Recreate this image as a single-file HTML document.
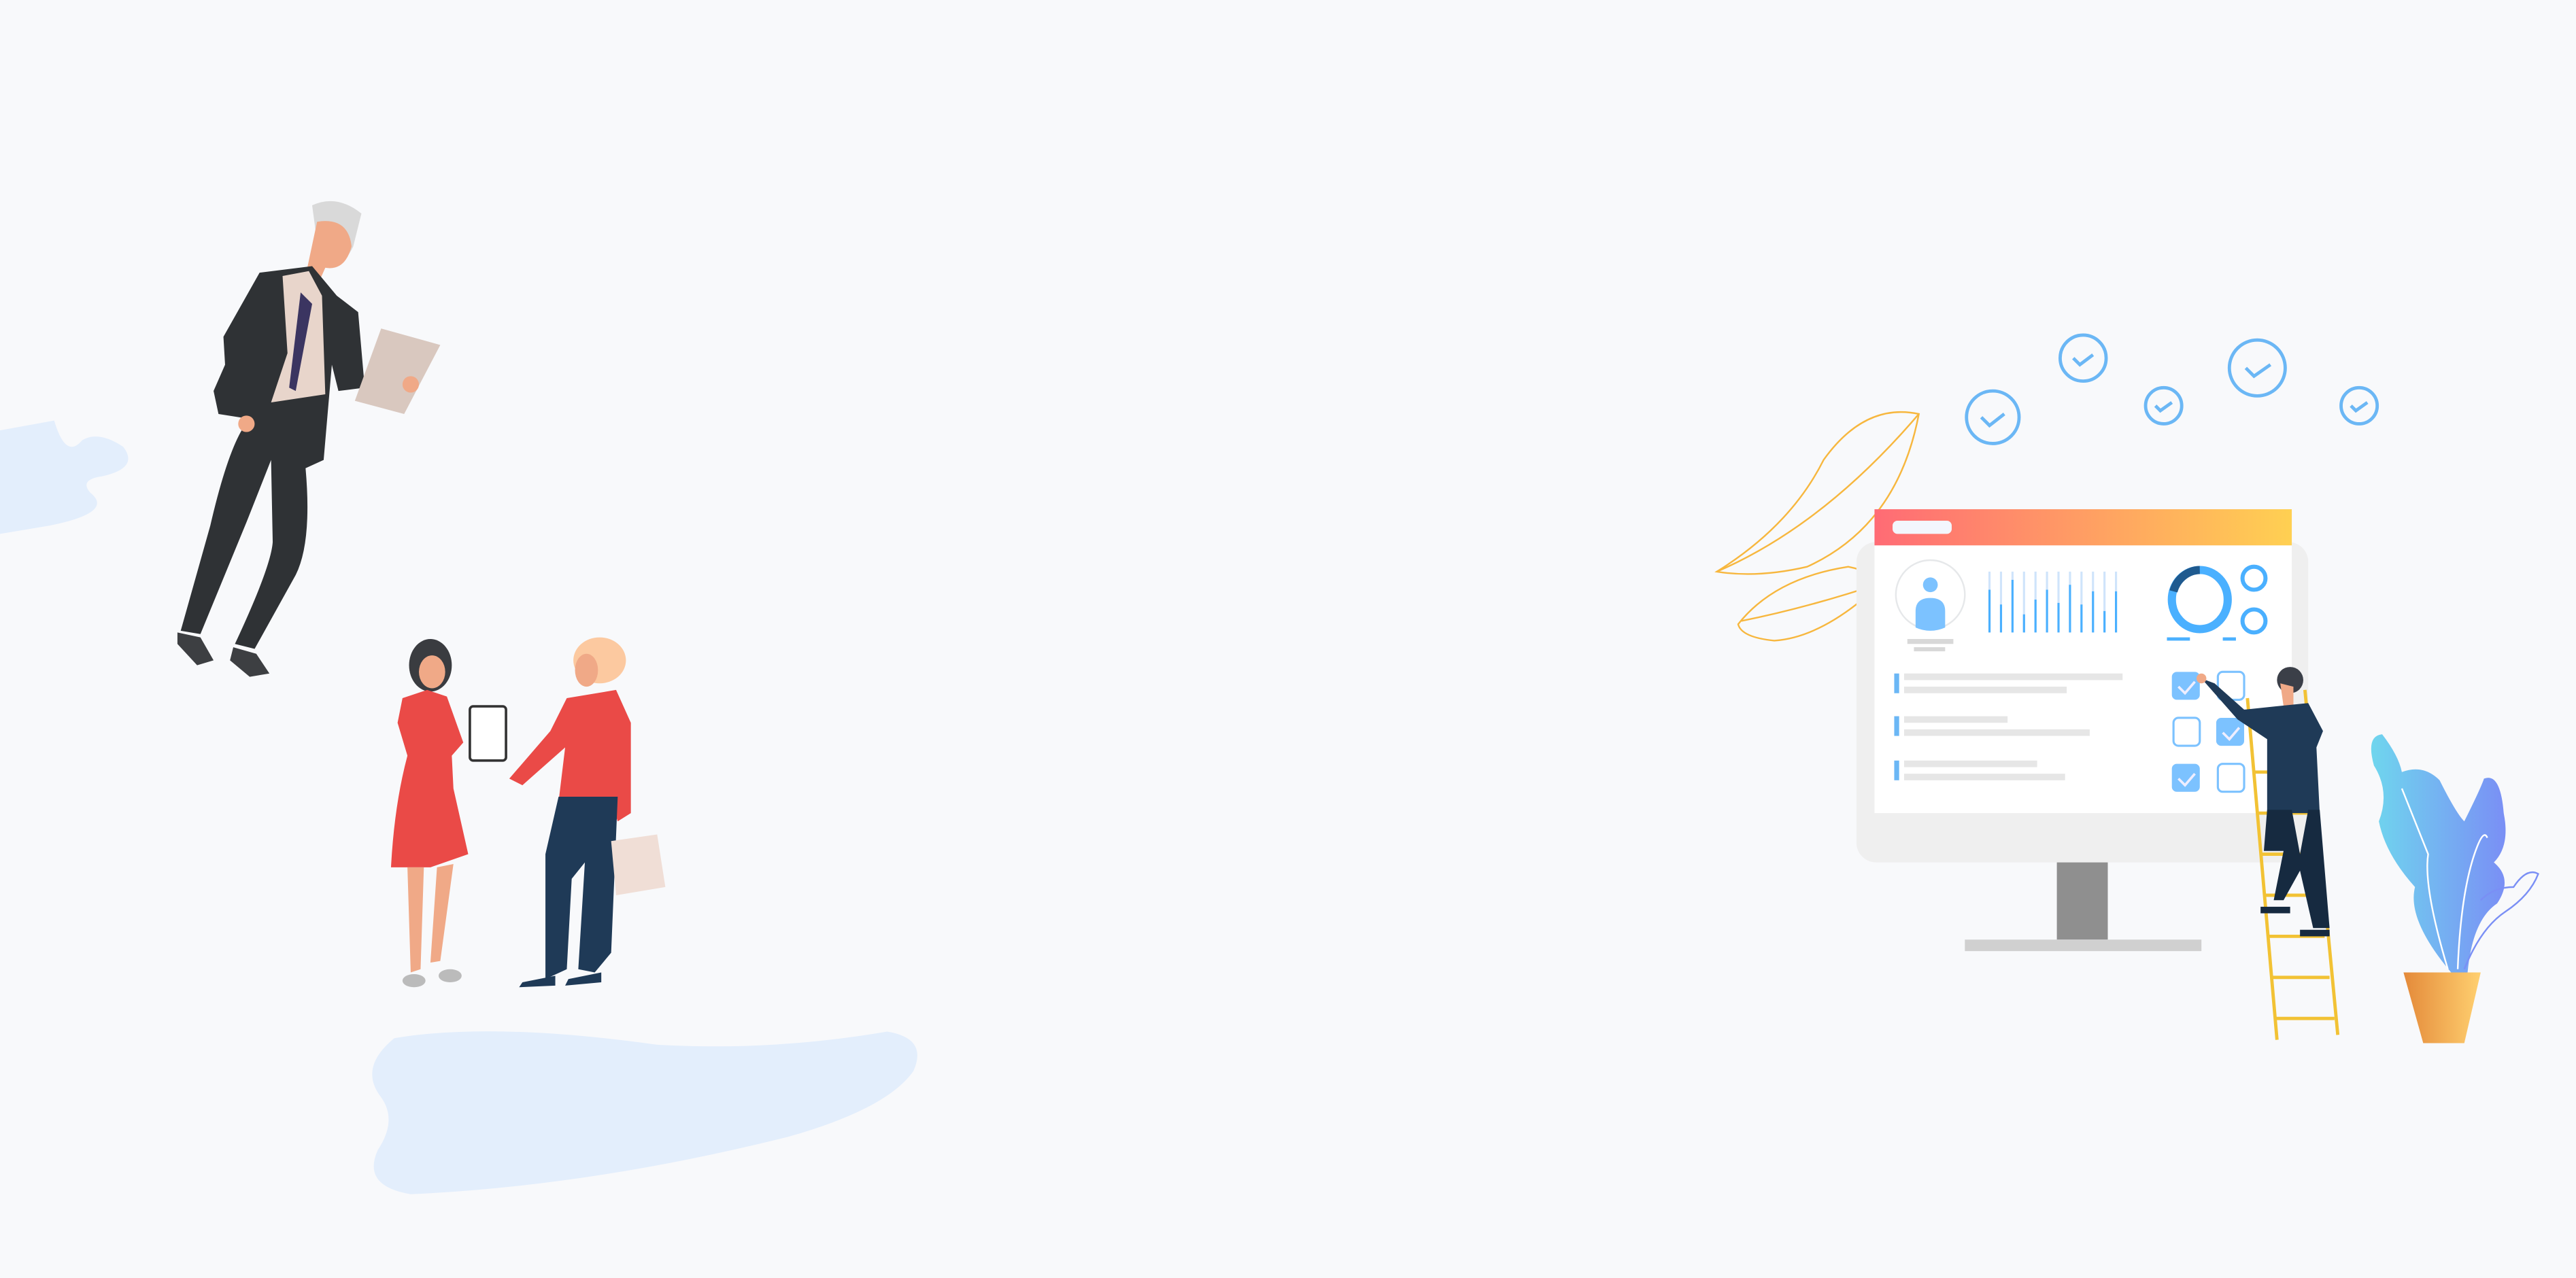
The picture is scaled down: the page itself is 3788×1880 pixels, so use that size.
<!DOCTYPE html>
<html><head><meta charset="utf-8"><style>
html,body{margin:0;padding:0;background:#f8f9fb;}
svg{display:block;width:3788px;height:1880px;}
</style></head><body>
<svg viewBox="0 0 1568 778" width="3788" height="1880" preserveAspectRatio="none" xmlns="http://www.w3.org/2000/svg">
<defs>
<linearGradient id="hd" x1="0" x2="1"><stop offset="0" stop-color="#ff6b75"/><stop offset="1" stop-color="#ffd052"/></linearGradient>
<linearGradient id="pl" x1="0" x2="1"><stop offset="0" stop-color="#6fd6ee"/><stop offset="1" stop-color="#7a8ff5"/></linearGradient>
<linearGradient id="pot" x1="0" x2="1"><stop offset="0" stop-color="#e48a3a"/><stop offset="1" stop-color="#ffd070"/></linearGradient>
</defs>
<rect width="1568" height="778" fill="#f8f9fb"/>
<!-- blobs -->
<path d="M0 262 L33 256 Q40 280 50 268 Q60 262 75 272 Q85 285 62 290 Q48 292 55 300 Q70 312 30 320 L0 325 Z" fill="#e3eefc"/>
<path d="M240 632 Q300 622 400 636 Q470 640 540 628 Q565 632 556 652 Q540 675 480 692 Q360 722 250 727 Q220 722 230 700 Q242 682 232 668 Q218 650 240 632Z" fill="#e3eefc"/>
<!-- businessman -->
<path d="M190 125 Q205 118 220 130 L215 150 Q208 165 195 162 Z" fill="#d9d9d9"/>
<path d="M193 135 Q212 132 214 150 Q210 165 198 163 L194 172 L186 168 Z" fill="#f0a987"/>
<path d="M158 166 L190 162 L205 180 L218 190 L222 236 L206 238 L202 222 L197 280 L186 285 Q190 330 180 350 L155 395 L143 392 Q165 345 166 330 L165 280 L150 318 L122 386 L110 384 L128 320 Q140 268 152 255 L133 252 L130 238 L137 222 L136 205 Z" fill="#2f3235"/>
<path d="M172 168 L188 165 L196 180 L198 240 L165 245 L175 215 Z" fill="#e8d5cb"/>
<path d="M183 178 L190 185 L180 238 L176 236 Z" fill="#3b3561"/>
<path d="M108 385 L122 388 L130 402 L120 405 L108 392Z M142 394 L156 398 L164 410 L152 412 L140 402Z" fill="#3d3f42"/>
<path d="M232 200 L268 210 L246 252 L216 244 Z" fill="#d9c8bf"/>
<circle cx="250" cy="234" r="5" fill="#f0a987"/>
<circle cx="150" cy="258" r="5" fill="#f0a987"/>
<!-- woman 1 -->
<ellipse cx="262" cy="405" rx="13" ry="16" fill="#3a3c40"/>
<ellipse cx="263" cy="409" rx="8" ry="10" fill="#f0a987"/>
<path d="M245 425 L260 420 L272 424 L282 452 L275 460 L276 480 L285 520 L262 528 L238 528 Q240 490 248 460 L242 440 Z" fill="#ea4a47"/>
<path d="M248 528 L258 528 L256 590 L250 592 Z M266 528 L276 526 L268 585 L262 586 Z" fill="#f0a987"/>
<rect x="286" y="430" width="22" height="33" rx="2" fill="#fff" stroke="#333" stroke-width="1.5"/>
<ellipse cx="252" cy="597" rx="7" ry="4" fill="#bbb"/><ellipse cx="274" cy="594" rx="7" ry="4" fill="#bbb"/>
<!-- woman 2 -->
<ellipse cx="365" cy="402" rx="16" ry="14" fill="#fcc9a0"/>
<ellipse cx="357" cy="408" rx="7" ry="10" fill="#f0a987"/>
<path d="M345 425 L375 420 L384 440 L384 495 L376 500 L372 488 L340 488 L344 455 L318 478 L310 474 L335 445 Z" fill="#ea4a47"/>
<path d="M340 485 L376 485 L372 580 L362 592 L352 590 L356 525 L348 535 L345 590 L332 596 L332 520 Z" fill="#1f3a57"/>
<path d="M372 512 L400 508 L405 540 L375 545 Z" fill="#f0ded6"/>
<path d="M318 598 L338 594 L338 600 L316 601Z M346 596 L366 592 L366 598 L344 600Z" fill="#1f3a57"/>
<!-- leaves -->
<g fill="none" stroke="#f7b73e" stroke-width="1">
<path d="M1045 348 Q1090 320 1110 280 Q1135 245 1168 252 Q1155 320 1100 345 Q1070 352 1045 348Z"/>
<path d="M1045 348 Q1110 320 1168 252"/>
<path d="M1058 380 Q1080 352 1125 345 Q1140 348 1145 355 Q1110 388 1080 390 Q1060 388 1058 380Z"/>
<path d="M1060 378 Q1100 370 1145 355"/>
</g>
<!-- check circles -->
<g fill="none" stroke="#6bb7f5" stroke-width="2">
<circle cx="1213" cy="254" r="16"/><circle cx="1268" cy="218" r="14"/><circle cx="1317" cy="247" r="11"/><circle cx="1374" cy="224" r="17"/><circle cx="1436" cy="247" r="11"/>
<path d="M1206 254 l5 5 l9 -7 M1262 218 l4 4 l8 -6 M1312 247 l3 3 l7 -5 M1367 224 l5 5 l10 -7 M1431 247 l3 3 l7 -5"/>
</g>
<!-- monitor -->
<rect x="1130" y="330" width="275" height="195" rx="12" fill="#efefef"/>
<rect x="1252" y="525" width="31" height="47" fill="#8f8f8f"/>
<rect x="1196" y="572" width="144" height="7" fill="#d0d0d0"/>
<rect x="1141" y="332" width="254" height="163" fill="#fff"/>
<rect x="1141" y="310" width="254" height="22" fill="url(#hd)"/>
<rect x="1152" y="317" width="36" height="8" rx="3" fill="#f3f6fd"/>
<circle cx="1175" cy="362" r="21" fill="#fff" stroke="#e6e8ea" stroke-width="1"/>
<circle cx="1175" cy="356" r="4.5" fill="#7cc2ff"/>
<path d="M1166 382 L1166 372 Q1166 364 1175 364 Q1184 364 1184 372 L1184 382 Q1175 386 1166 382Z" fill="#7cc2ff"/>
<rect x="1161" y="389" width="28" height="3" fill="#d8d8d8"/><rect x="1165" y="394" width="19" height="2.5" fill="#d8d8d8"/>
<g stroke-width="1.3">
<g stroke="#cfe4fb"><path d="M1211 348V385M1218 348V385M1225 348V385M1232 348V385M1239 348V385M1246 348V385M1253 348V385M1260 348V385M1267 348V385M1274 348V385M1281 348V385M1288 348V385"/></g>
<g stroke="#4ab0ff"><path d="M1211 359V385M1218 368V385M1225 353V385M1232 374V385M1239 365V385M1246 359V385M1253 367V385M1260 356V385M1267 368V385M1274 360V385M1281 372V385M1288 360V385"/></g>
</g>
<ellipse cx="1339" cy="365" rx="17" ry="18" fill="none" stroke="#4ab0ff" stroke-width="5"/>
<path d="M1339 347 A17 18 0 0 0 1323 360" fill="none" stroke="#1f5a8f" stroke-width="5"/>
<circle cx="1372" cy="352" r="7" fill="none" stroke="#4ab0ff" stroke-width="2.5"/>
<circle cx="1372" cy="378" r="7" fill="none" stroke="#4ab0ff" stroke-width="2.5"/>
<rect x="1319" y="388" width="14" height="2" fill="#4ab0ff"/><rect x="1353" y="388" width="8" height="2" fill="#4ab0ff"/>
<g fill="#e6e6e6">
<rect x="1159" y="410" width="133" height="4"/><rect x="1159" y="418" width="99" height="4"/>
<rect x="1159" y="436" width="63" height="4"/><rect x="1159" y="444" width="113" height="4"/>
<rect x="1159" y="463" width="81" height="4"/><rect x="1159" y="471" width="98" height="4"/>
</g>
<g fill="#6bb7f5"><rect x="1153" y="410" width="3" height="12"/><rect x="1153" y="436" width="3" height="12"/><rect x="1153" y="463" width="3" height="12"/></g>
<g fill="#7cc2ff"><rect x="1322" y="409" width="17" height="17" rx="3"/><rect x="1349" y="437" width="17" height="17" rx="3"/><rect x="1322" y="465" width="17" height="17" rx="3"/></g>
<g fill="none" stroke="#7cc2ff" stroke-width="1.3"><rect x="1350" y="409" width="16" height="17" rx="3"/><rect x="1323" y="437" width="16" height="17" rx="3"/><rect x="1350" y="465" width="16" height="17" rx="3"/></g>
<g fill="none" stroke="#eef" stroke-width="1.5"><path d="M1326 418l4 4 6-7M1353 446l4 4 6-7M1326 474l4 4 6-7"/></g>
<!-- ladder -->
<g stroke="#f2c234" stroke-width="2" fill="none">
<path d="M1368 425 L1386 633 M1403 420 L1423 630"/>
<path d="M1372 470h33M1374 495h33M1376 520h34M1378 545h34M1380 570h35M1382 595h36M1384 620h37"/>
</g>
<!-- man on ladder -->
<ellipse cx="1394" cy="414" rx="8" ry="8" fill="#3b3f48"/>
<path d="M1388 416 L1396 418 L1396 430 L1390 430Z" fill="#f0a987"/>
<path d="M1340 413 L1348 416 L1366 432 L1385 430 L1405 428 L1414 445 L1410 455 L1412 495 L1380 495 L1380 450 L1362 438 Z" fill="#1f3a57"/>
<path d="M1380 493 L1395 493 L1400 520 L1405 493 L1412 493 L1418 565 L1408 565 L1400 530 L1390 548 L1384 548 L1390 518 L1378 518Z" fill="#162a40"/>
<circle cx="1340" cy="413" r="3" fill="#f0a987"/>
<path d="M1376 552h18v4h-18Z M1400 566h18v4h-18Z" fill="#162a40"/>
<!-- plant -->
<path d="M1492 592 Q1465 560 1470 540 Q1452 520 1448 500 Q1455 482 1445 466 Q1440 448 1450 447 Q1460 460 1462 470 Q1475 465 1485 475 Q1495 495 1500 500 Q1510 480 1512 474 Q1522 470 1524 495 Q1528 515 1518 525 Q1530 535 1520 550 Q1505 560 1502 592Z" fill="url(#pl)"/>
<g fill="none" stroke="#fff" stroke-width="1"><path d="M1490 590 Q1475 540 1478 520 Q1470 500 1462 480 M1496 590 Q1498 540 1508 515 Q1512 505 1514 510"/></g>
<path d="M1500 590 Q1510 565 1525 555 Q1540 545 1545 532 Q1538 528 1530 540 Q1518 540 1510 548" fill="none" stroke="#7a8ff5" stroke-width="1"/>
<path d="M1463 592 L1510 592 L1500 635 L1475 635 Z" fill="url(#pot)"/>
</svg>
</body></html>
